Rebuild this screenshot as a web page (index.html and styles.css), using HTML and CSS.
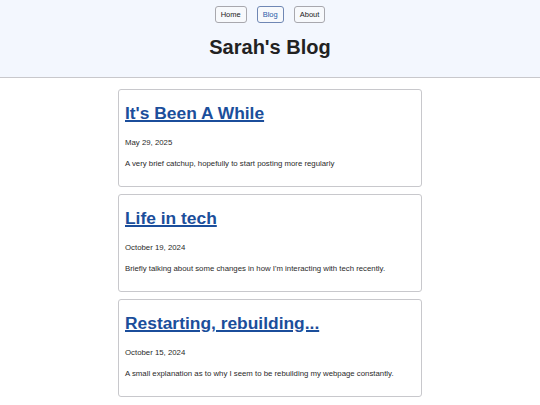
FILE: index.html
```html
<!DOCTYPE html>
<html lang="en">
<head>
<meta charset="utf-8">
<title>Sarah's Blog</title>
<link rel="stylesheet" href="styles.css">
</head>
<body>
<header class="site-header">
  <nav class="nav">
    <a class="nav-btn" href="#">Home</a>
    <a class="nav-btn nav-btn-active" href="#">Blog</a>
    <a class="nav-btn" href="#">About</a>
  </nav>
  <h1 class="site-title">Sarah's Blog</h1>
</header>
<main class="posts">
  <article class="post">
    <h2 class="post-title"><a href="#">It's Been A While</a></h2>
    <p class="post-date">May 29, 2025</p>
    <p class="post-desc">A very brief catchup, hopefully to start posting more regularly</p>
  </article>
  <article class="post">
    <h2 class="post-title"><a href="#">Life in tech</a></h2>
    <p class="post-date">October 19, 2024</p>
    <p class="post-desc">Briefly talking about some changes in how I'm interacting with tech recently.</p>
  </article>
  <article class="post">
    <h2 class="post-title"><a href="#">Restarting, rebuilding...</a></h2>
    <p class="post-date">October 15, 2024</p>
    <p class="post-desc">A small explanation as to why I seem to be rebuilding my webpage constantly.</p>
  </article>
</main>
</body>
</html>
```
FILE: styles.css
```css
html, body {
  margin: 0;
  padding: 0;
  background: #ffffff;
  font-family: "Liberation Sans", Arial, sans-serif;
  color: #222222;
}

.site-header {
  background: #f3f7fe;
  border-bottom: 1px solid #c8c8cc;
  padding: 6px 0 18px;
  text-align: center;
}

.nav {
  display: flex;
  justify-content: center;
  gap: 10px;
}

.nav-btn {
  display: inline-flex;
  align-items: center;
  height: 15px;
  padding: 0 5px;
  border: 1px solid #a8a8ae;
  border-radius: 3px;
  font-size: 7.5px;
  color: #222222;
  text-decoration: none;
  background: #f7f9fc;
}

.nav-btn-active {
  border-color: #6f87b4;
  color: #2a5aa8;
}

.site-title {
  margin: 13px 0 0;
  font-size: 20px;
  line-height: 23px;
  font-weight: bold;
  color: #222222;
}

.posts {
  width: 304px;
  margin: 11px auto 0;
  display: flex;
  flex-direction: column;
  gap: 7px;
}

.post {
  box-sizing: border-box;
  height: 98px;
  border: 1px solid #c8c8cc;
  border-radius: 3px;
  padding: 0 6px;
}

.post-title {
  margin: 13px 0 15px;
  font-size: 17.4px;
  line-height: 20px;
  font-weight: bold;
}

.post-title a {
  color: #1b4e9b;
  text-decoration: underline;
  text-decoration-thickness: 1.5px;
}

.post-date {
  margin: 0 0 12px;
  font-size: 7.8px;
  line-height: 9px;
  color: #2a2a2a;
}

.post-desc {
  margin: 0;
  font-size: 7.8px;
  line-height: 9px;
  color: #2a2a2a;
}
```
